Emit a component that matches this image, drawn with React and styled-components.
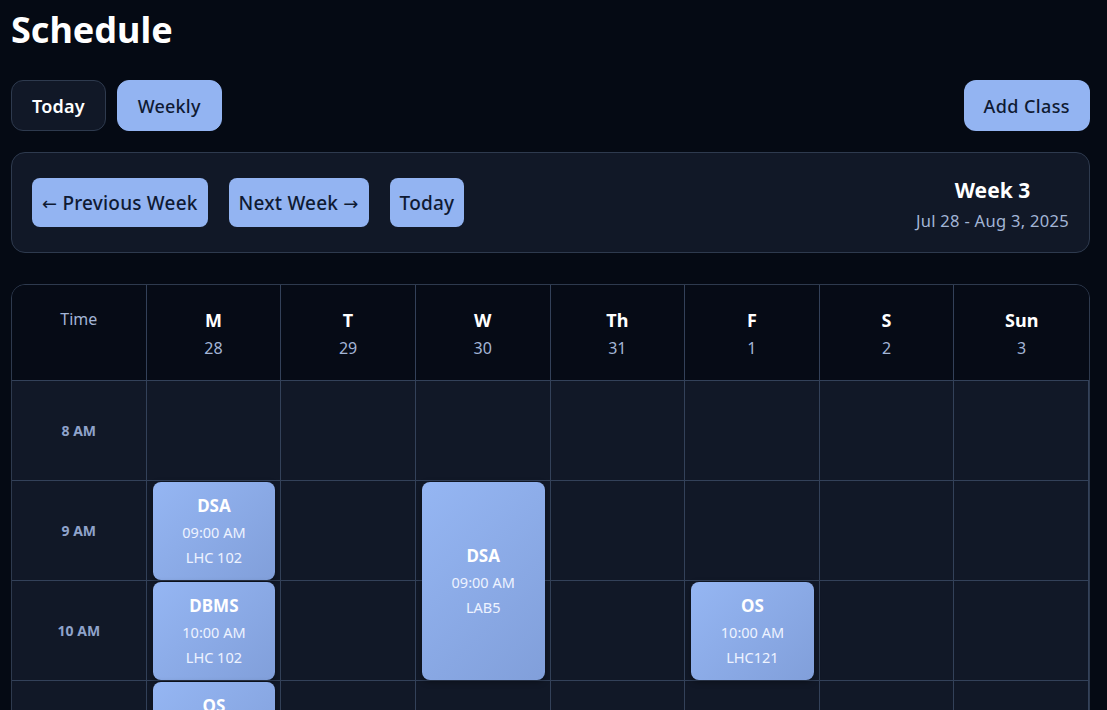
import React from "react";
import styled, { createGlobalStyle } from "styled-components";

const days = [
  { name: "M", date: 28 },
  { name: "T", date: 29 },
  { name: "W", date: 30 },
  { name: "Th", date: 31 },
  { name: "F", date: 1 },
  { name: "S", date: 2 },
  { name: "Sun", date: 3 },
];

const hours = ["8 AM", "9 AM", "10 AM", "11 AM", "12 PM", "1 PM"];

// row = index into hours, col = index into days
const classes = [
  { title: "DSA", time: "09:00 AM", room: "LHC 102", row: 1, col: 0, span: 1 },
  { title: "DBMS", time: "10:00 AM", room: "LHC 102", row: 2, col: 0, span: 1 },
  { title: "OS", time: "11:00 AM", room: "LHC121", row: 3, col: 0, span: 1 },
  { title: "DSA", time: "09:00 AM", room: "LAB5", row: 1, col: 2, span: 2 },
  { title: "OS", time: "10:00 AM", room: "LHC121", row: 2, col: 4, span: 1 },
];

export default function App() {
  return (
    <>
      <GlobalStyle />
      <Page>
        <Title>Schedule</Title>
        <Toolbar>
          <Tabs>
            <Tab>Today</Tab>
            <Tab active>Weekly</Tab>
          </Tabs>
          <AddButton>Add Class</AddButton>
        </Toolbar>

        <NavPanel>
          <NavButtons>
            <NavButton>
              <Arrow>←</Arrow> Previous Week
            </NavButton>
            <NavButton>
              Next Week <Arrow>→</Arrow>
            </NavButton>
            <NavButton>Today</NavButton>
          </NavButtons>
          <WeekInfo>
            <WeekTitle>Week 3</WeekTitle>
            <WeekRange>Jul 28 - Aug 3, 2025</WeekRange>
          </WeekInfo>
        </NavPanel>

        <Calendar>
          <HeaderCell>
            <TimeHead>Time</TimeHead>
          </HeaderCell>
          {days.map((d) => (
            <HeaderCell key={d.name}>
              <DayName>{d.name}</DayName>
              <DayDate>{d.date}</DayDate>
            </HeaderCell>
          ))}

          {hours.map((h, r) => (
            <React.Fragment key={h}>
              <TimeCell style={{ gridRow: r + 2, gridColumn: 1 }}>{h}</TimeCell>
              {days.map((d, c) => (
                <SlotCell
                  key={d.name}
                  style={{ gridRow: r + 2, gridColumn: c + 2 }}
                />
              ))}
            </React.Fragment>
          ))}

          {classes.map((k, i) => (
            <ClassCard
              key={i}
              style={{
                gridRow: `${k.row + 2} / span ${k.span}`,
                gridColumn: k.col + 2,
              }}
            >
              <ClassTitle>{k.title}</ClassTitle>
              <ClassMeta>{k.time}</ClassMeta>
              <ClassMeta>{k.room}</ClassMeta>
            </ClassCard>
          ))}
        </Calendar>
      </Page>
    </>
  );
}

const GlobalStyle = createGlobalStyle`
  body {
    margin: 0;
    background: #050a14;
    font-family: "Noto Sans", "Open Sans", sans-serif;
    color: #ffffff;
  }
`;

const Page = styled.div`
  padding: 8px 17px 40px 11px;
`;

const Title = styled.h1`
  margin: 0 0 29px;
  font-size: 36px;
  line-height: 43px;
  font-weight: 700;
  color: #ffffff;
`;

const Toolbar = styled.div`
  display: flex;
  justify-content: space-between;
  align-items: center;
`;

const Tabs = styled.div`
  display: flex;
  gap: 11px;
`;

const Tab = styled.button`
  height: 51px;
  padding: 0 20px;
  border-radius: 12px;
  font-family: inherit;
  font-size: 18px;
  letter-spacing: 0.2px;
  font-weight: ${(p) => (p.active ? 500 : 600)};
  color: ${(p) => (p.active ? "#0f1a33" : "#ffffff")};
  background: ${(p) => (p.active ? "#93b4f2" : "#111827")};
  border: 1px solid ${(p) => (p.active ? "#93b4f2" : "#2e3a4e")};
`;

const AddButton = styled.button`
  height: 51px;
  padding: 0 20px;
  border-radius: 12px;
  border: none;
  background: #93b4f2;
  color: #0f1a33;
  font-family: inherit;
  font-size: 18px;
  letter-spacing: 0.4px;
  font-weight: 500;
`;

const NavPanel = styled.div`
  margin-top: 21px;
  display: flex;
  justify-content: space-between;
  align-items: center;
  height: 101px;
  box-sizing: border-box;
  padding: 0 20px;
  background: #111827;
  border: 1px solid #2e3a4e;
  border-radius: 14px;
`;

const NavButtons = styled.div`
  display: flex;
  gap: 21px;
`;

const NavButton = styled.button`
  height: 49px;
  padding: 1px 10px 0;
  border: none;
  border-radius: 8px;
  background: #93b4f2;
  color: #0f1a33;
  font-family: inherit;
  font-size: 19px;
  letter-spacing: 0.2px;
  font-weight: 500;
`;

const Arrow = styled.span`
  font-family: "DejaVu Sans", sans-serif;
  font-size: 18px;
  font-weight: 400;
`;

const WeekInfo = styled.div`
  margin-top: 4px;
  display: flex;
  flex-direction: column;
  align-items: center;
  gap: 7px;
`;

const WeekTitle = styled.div`
  font-size: 21px;
  font-weight: 700;
  line-height: 26px;
`;

const WeekRange = styled.div`
  font-size: 16.5px;
  letter-spacing: 0.3px;
  line-height: 22px;
  color: #a3b5d6;
`;

const Calendar = styled.div`
  margin-top: 31px;
  display: grid;
  grid-template-columns: repeat(8, 1fr);
  grid-template-rows: 96px;
  grid-auto-rows: 100px;
  border: 1px solid #2e3a4e;
  border-radius: 14px;
  overflow: hidden;
  background: #111827;
`;

const HeaderCell = styled.div`
  background: #060b16;
  border-right: 1px solid #334159;
  border-bottom: 1px solid #334159;
  display: flex;
  flex-direction: column;
  align-items: center;
  padding-top: 22px;
  &:nth-child(8) {
    border-right: none;
  }
`;

const TimeHead = styled.div`
  font-size: 16px;
  line-height: 24px;
  color: #a3b5d6;
`;

const DayName = styled.div`
  font-size: 18px;
  font-weight: 700;
  line-height: 26px;
  color: #ffffff;
`;

const DayDate = styled.div`
  margin-top: 4px;
  font-size: 16px;
  line-height: 22px;
  color: #a3b5d6;
`;

const TimeCell = styled.div`
  display: flex;
  align-items: center;
  justify-content: center;
  font-size: 14px;
  font-weight: 700;
  color: #8fa3cb;
  border-right: 1px solid #334159;
  border-bottom: 1px solid #334159;
`;

const SlotCell = styled.div`
  border-right: 1px solid #334159;
  border-bottom: 1px solid #334159;
`;

const ClassCard = styled.div`
  margin: 1px 6px 1px 6px;
  border-radius: 8px;
  background: linear-gradient(135deg, #95b6f3 0%, #819fda 100%);
  box-shadow: 0 2px 6px rgba(0, 0, 0, 0.35);
  display: flex;
  flex-direction: column;
  align-items: center;
  justify-content: center;
  gap: 5px;
  z-index: 1;
`;

const ClassTitle = styled.div`
  font-size: 17px;
  font-weight: 700;
  line-height: 22px;
  color: #ffffff;
`;

const ClassMeta = styled.div`
  font-size: 14.5px;
  line-height: 20px;
  color: #eef3ff;
`;
